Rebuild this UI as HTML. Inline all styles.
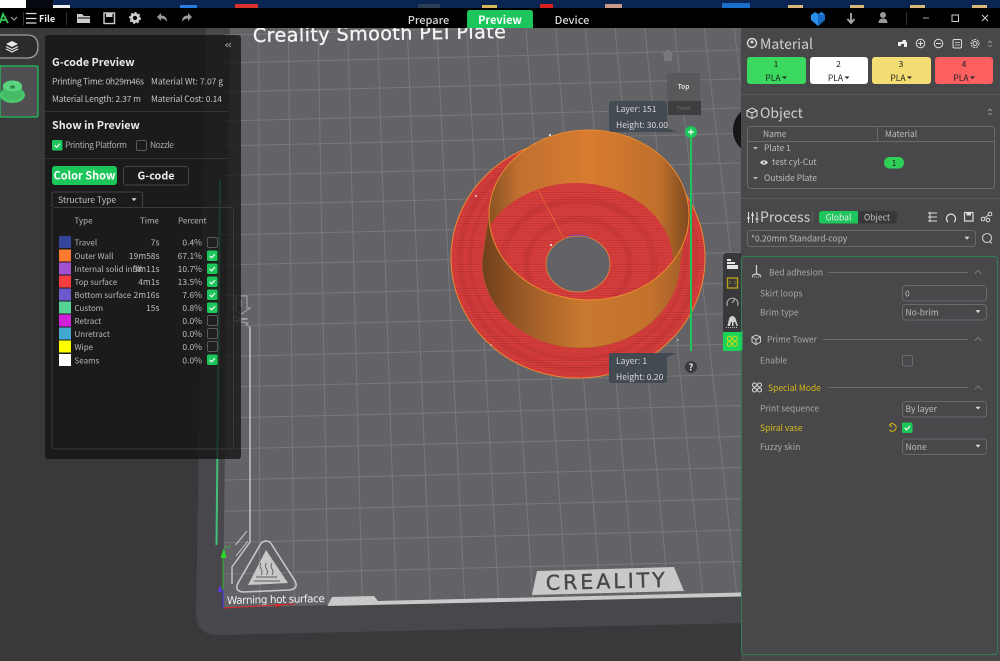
<!DOCTYPE html>
<html lang="en"><head><meta charset="utf-8"><title>Creality Print Preview</title>
<style>
html,body{margin:0;padding:0;background:#39393b;overflow:hidden}
svg{display:block;position:absolute;left:0;top:0}
text{font-family:"Noto Sans CJK SC","Liberation Sans",sans-serif;font-size:8.5px;fill:#c4c4c4}
.h{font-size:10.8px;font-weight:700;fill:#ececec}
.ttl{font-size:14px;fill:#d0d0d0}
.d{fill:#222}
.m{fill:#bdbdbd}
.l{fill:#b8b8b8;font-size:8px}
.g{fill:#a8a8a8}
.y{fill:#d8bb14}
.grid line{stroke:#78787c;stroke-width:1}
</style></head><body>
<svg width="1000" height="661" viewBox="0 0 1000 661" xmlns="http://www.w3.org/2000/svg">
<defs>
<linearGradient id="wall" x1="482" x2="680" y1="0" y2="0" gradientUnits="userSpaceOnUse"><stop offset="0" stop-color="#6f401b"/><stop offset=".22" stop-color="#9c5b27"/><stop offset=".5" stop-color="#c9782f"/><stop offset=".85" stop-color="#c4722c"/><stop offset="1" stop-color="#a8622a"/></linearGradient>
<linearGradient id="inner" x1="489" x2="689" y1="0" y2="0" gradientUnits="userSpaceOnUse"><stop offset="0" stop-color="#8a5222"/><stop offset=".15" stop-color="#c17030"/><stop offset=".5" stop-color="#d87c30"/><stop offset=".85" stop-color="#c06f2b"/><stop offset="1" stop-color="#7e4a20"/></linearGradient>
<pattern id="fine" width="3" height="2.4" patternUnits="userSpaceOnUse"><rect width="3" height="1" fill="#9c2a30" opacity=".38"/></pattern>
<clipPath id="top"><ellipse cx="589" cy="215" rx="100" ry="85"/></clipPath>
<clipPath id="view"><rect x="0" y="28" width="741" height="633"/></clipPath>
<g id="ck"><rect width="10.5" height="10.5" rx="1.5" fill="#1cc65a"/><path d="M2.6 5.4 4.6 7.3 8 3.6" fill="none" stroke="#fff" stroke-width="1.1"/></g>
<g id="uk"><rect x=".5" y=".5" width="10" height="10" rx="1.5" fill="none" stroke="#5a5a5a"/></g>
<path id="chev" d="M-3.5 2 0-1.500 3.500 2" fill="none" stroke="#777" stroke-width="1.1"/>
<path id="tri" d="M-2.500-1.200H2.500L0 1.600Z" fill="#ddd"/>
</defs>

<!-- desktop wallpaper strip -->
<rect width="1000" height="8" fill="#0b2552"/>
<rect width="26" height="8" fill="#fff"/>
<rect x="26" width="27" height="8" fill="#05080f"/>
<rect x="53" y="5" width="17" height="3" fill="#eee"/>
<rect x="180" y="5" width="17" height="3" fill="#2a7de0"/>
<rect x="235" y="4" width="23" height="4" fill="#d8322c"/>
<rect x="418" y="4" width="22" height="4" fill="#2c3f55"/>
<rect x="482" y="5" width="15" height="3" fill="#d8b45a"/>
<rect x="540" y="4" width="13" height="4" fill="#d8201f"/>
<rect x="605" y="4" width="17" height="4" fill="#c89a88"/>
<rect x="722" y="3" width="28" height="5" fill="#1a70c8"/>
<rect x="788" y="5" width="15" height="3" fill="#d8b878"/>
<rect x="850" y="5" width="14" height="3" fill="#d8b878"/>
<rect x="910" y="5" width="15" height="3" fill="#d8b878"/>
<rect x="972" y="5" width="15" height="3" fill="#d8b878"/>

<!-- viewport -->
<g clip-path="url(#view)">
<rect y="28" width="741" height="633" fill="#39393b"/>
<path d="M206 20 196 612Q196 636 220 635L745 623V20Z" fill="#48484c"/>
<path d="M230 20 223 608 745 594V20Z" fill="#636367"/>
<g class="grid">
<line x1="259.800" y1="607" x2="258.700" y2="28"/><line x1="294" y1="606" x2="288.400" y2="28"/><line x1="328.200" y1="605" x2="318.100" y2="28"/><line x1="362.300" y1="604" x2="347.800" y2="28"/><line x1="396.400" y1="603" x2="377.500" y2="28"/><line x1="430.500" y1="602" x2="407.200" y2="28"/><line x1="464.600" y1="602" x2="436.900" y2="28"/><line x1="498.700" y1="601" x2="466.600" y2="28"/><line x1="532.800" y1="600" x2="496.300" y2="28"/><line x1="566.800" y1="599" x2="526" y2="28"/><line x1="600.800" y1="598" x2="555.700" y2="28"/><line x1="634.800" y1="597" x2="585.400" y2="28"/><line x1="668.800" y1="597" x2="615.100" y2="28"/><line x1="702.800" y1="596" x2="644.800" y2="28"/><line x1="736.800" y1="595" x2="674.500" y2="28"/><line x1="770.800" y1="594" x2="704.200" y2="28"/><line x1="805" y1="594" x2="734" y2="28"/>
<line x1="225" y1="574" x2="740" y2="561.500"/><line x1="225" y1="542.600" x2="740" y2="530"/><line x1="225" y1="511.300" x2="740" y2="498.800"/><line x1="225" y1="480" x2="740" y2="467.500"/><line x1="225" y1="449" x2="740" y2="436.500"/><line x1="225" y1="418" x2="740" y2="405.500"/><line x1="225" y1="387" x2="740" y2="374.500"/><line x1="225" y1="356.500" x2="740" y2="344"/><line x1="225" y1="326" x2="740" y2="313.500"/><line x1="225" y1="295.500" x2="740" y2="283"/><line x1="225" y1="265" x2="740" y2="252.500"/><line x1="225" y1="235" x2="740" y2="222.500"/><line x1="225" y1="205" x2="740" y2="192.500"/><line x1="225" y1="175.500" x2="740" y2="163"/><line x1="225" y1="146" x2="740" y2="133.500"/><line x1="225" y1="121" x2="740" y2="108"/><line x1="225" y1="92" x2="740" y2="79"/><line x1="225" y1="63" x2="740" y2="50"/><line x1="225" y1="35" x2="740" y2="22"/>
</g>
<!-- plate title -->
<text x="253" y="42" transform="rotate(-0.9 253 42)" textLength="253" style="font-family:'DejaVu Sans',sans-serif;font-size:19px;fill:#f4f4f4;stroke:#f4f4f4;stroke-width:.35">Creality Smooth PEI Plate</text>

<!-- plate markings -->
<path d="M327.500 606 332 597 374 596 378 601 741 592.500V596.500Z" fill="#c9c9c9"/>
<path d="M532 595 537 571 674 567 684 591Z" fill="#c9c9c9"/>
<text x="546" y="590" textLength="119" transform="rotate(-1.500 546 590)" style="font-family:'DejaVu Sans',sans-serif;font-size:20.500px;fill:#48484c;stroke:#48484c;stroke-width:.4">CREALITY</text>
<path d="M250 327V542L232 567V584" fill="none" stroke="#c8c8c8" stroke-width="1.400"/>
<path d="M235.600 545 247 531M236 556 248 541" stroke="#c8c8c8" stroke-width="1"/>
<path d="M266 541Q262 541 260 545L238 583Q234 591 243 592L289 590Q299 589 295 581L272 545Q270 541 266 541Z" fill="none" stroke="#c8c8c8" stroke-width="1.600"/>
<path d="M266 550 288 583 248 585Z" fill="#c8c8c8"/>
<path d="M261 563q-2 3 0 6t0 6M266.500 563q-2 3 0 6t0 6M272 563q-2 3 0 6t0 6M256 577H277M254 581H280" stroke="#5c5c60" stroke-width=".9" fill="none"/>
<text x="227" y="604" textLength="98" transform="rotate(-1.200 227 604)" style="font-family:'DejaVu Sans',sans-serif;font-size:10.500px;fill:#f0f0f0">Warning hot surface</text>
<!-- axes -->
<path d="M223 608 295 604" stroke="#e0252a" stroke-width="1"/>
<path d="M276 604 284 605 276 607Z" fill="#f01c1c"/>
<path d="M223 555V606" stroke="#27b52a" stroke-width="1"/>
<path d="M220.500 558 224 548 226.500 558Z" fill="#2ad82a"/>
<path d="M224 546 228 548 231 545" stroke="#3fb04a" fill="none" stroke-width=".8"/>
<path d="M223 590V608" stroke="#3b2fe0" stroke-width="1"/>
<path d="M218 592 220 585 222 592Z" fill="#5b34f0"/>
<path d="M216.500 545 220 180" stroke="#41bf7a" stroke-width="2"/>
<!-- arrow marker -->
<path d="M236 296H247V308H250L241.500 314 232 308H236ZM241 300V307M233 317 248 319 233 321 248 323 246 324.500 250 327" fill="none" stroke="#a8a8a8" stroke-width="1"/>
<!-- model -->
<ellipse cx="578" cy="258" rx="127" ry="120" fill="#d93e3c" stroke="#ee8a30" stroke-width="1"/>
<ellipse cx="578" cy="258" rx="126.500" ry="119.500" fill="url(#fine)"/>
<g fill="none" stroke="#8f2529" opacity=".14">
<ellipse cx="578" cy="258" rx="118" ry="111" stroke-width="6"/><ellipse cx="578" cy="258" rx="108" ry="101" stroke-width="4"/>
</g>
<path d="M489 215 482 262A99 86 0 0 0 680 262L689 215Z" fill="url(#wall)" stroke="#a85f28" stroke-width=".5"/>
<ellipse cx="589" cy="215" rx="100" ry="85" fill="url(#inner)"/>
<g clip-path="url(#top)">
<ellipse cx="576" cy="262" rx="97" ry="79" fill="#da3e3c"/>
<ellipse cx="576" cy="262" rx="97" ry="79" fill="url(#fine)"/>
<g fill="none" stroke="#8f2529" opacity=".13">
<ellipse cx="578" cy="264" rx="76" ry="64" stroke-width="7"/><ellipse cx="578" cy="264" rx="52" ry="45" stroke-width="6"/>
</g>
</g>
<ellipse cx="589" cy="215" rx="100" ry="85" fill="none" stroke="#ea8a30" stroke-width="1"/>
<ellipse cx="578" cy="264" rx="32" ry="28" fill="#636367" stroke="#e68a38" stroke-width=".8"/>
<path d="M563 237 538 190" stroke="#e58a35" stroke-width=".7" opacity=".8"/>
<path d="M568 236Q578 233 589 237" fill="none" stroke="#6040d0" stroke-width=".7"/>
<circle cx="550" cy="135" r="1" fill="#fff"/><circle cx="476" cy="196" r="1" fill="#ddd"/><circle cx="551" cy="245" r="1" fill="#fff"/>
<circle cx="491" cy="345" r=".8" fill="#ddd"/><circle cx="678" cy="340" r=".8" fill="#ddd"/>

<!-- home & view cube -->
<path d="M662 55 668 49 674 55H672V61H664V55Z" fill="#78787c"/>
<rect x="667" y="73" width="33" height="28" fill="#59595c"/>
<text x="683.500" y="89" text-anchor="middle" style="font-size:6.500px;font-weight:700;fill:#ddd">Top</text>
<rect x="668" y="101" width="33" height="14" fill="#3e3e41"/>
<text x="684" y="110" text-anchor="middle" style="font-size:5.500px;fill:#707074">Front</text>

<!-- layer tooltips and slider -->
<path d="M612 101H664Q667 101 667 104V128L677 132H612Q609 132 609 129V104Q609 101 612 101Z" fill="#434a52"/>
<text x="616" y="112" style="fill:#d8d8d8;font-size:8.500px">Layer: 151</text>
<text x="616" y="128" style="fill:#d8d8d8;font-size:8.500px">Height: 30.00</text>
<path d="M612 383H664Q667 383 667 380V357L677 353H612Q609 353 609 356V380Q609 383 612 383Z" fill="#434a52"/>
<text x="616" y="364" style="fill:#d8d8d8;font-size:8.500px">Layer: 1</text>
<text x="616" y="380" style="fill:#d8d8d8;font-size:8.500px">Height: 0.20</text>
<rect x="690" y="132" width="2" height="219" fill="#1cc65a"/>
<circle cx="691" cy="132" r="6" fill="#1cc65a"/>
<path d="M688 132H694M691 129V135" stroke="#fff" stroke-width="1.200"/>
<circle cx="691" cy="367" r="6" fill="#3a3a3e"/>
<text x="691" y="370.500" text-anchor="middle" style="font-size:9px;font-weight:700;fill:#eee">?</text>

<circle cx="758" cy="130" r="25" fill="#161618"/>
<!-- right side toolbar -->
<path d="M741 253H727Q723 253 723 257V347Q723 351 727 351H741Z" fill="#38383b"/>
<path d="M727 259H731V261H727ZM727 262H735V264H727ZM727 265H738V269H727Z" fill="#e6e6e6"/>
<rect x="727.500" y="278" width="10" height="10" fill="none" stroke="#b6a01c" stroke-width="1.400"/><path d="M730 281V285M735 281V285" stroke="#b6a01c" stroke-dasharray="1 1"/>
<path d="M727.500 306A5.500 5.500 0 1 1 737.500 306" fill="none" stroke="#aaa" stroke-width="1.200"/><path d="M732 303 735 299" stroke="#aaa" stroke-width="1.200"/>
<path d="M727.500 326 729 319Q730 316 732 316 735 316 736 320L738 326H736.500L735 322H733.500V326H732V322H731L730 326Z" fill="#d0d0d0"/><path d="M726 327.500H738" stroke="#bbb" stroke-dasharray="1 1"/>
<rect x="723" y="332" width="18" height="19" rx="1" fill="#1bd45a"/>
<g fill="none" stroke="#c8d81a" stroke-width="1.100"><circle cx="729.500" cy="338.500" r="2.300"/><circle cx="735" cy="338.500" r="2.300"/><circle cx="729.500" cy="344" r="2.300"/><circle cx="735" cy="344" r="2.300"/></g>
</g>

<!-- left strip -->
<path d="M0 35H27Q38 35 38 46.500 38 58 27 58H0" fill="#2b2b2c" stroke="#a0a0a0" stroke-width="1.300"/>
<path d="M12 41 18 44 12 47 6 44Z" fill="#e8e8e8"/><path d="M6 46.500 12 49.500 18 46.500M6 49 12 52 18 49" fill="none" stroke="#e8e8e8" stroke-width="1.200"/>
<path d="M0 66H36Q38 66 38 68V115Q38 117 36 117H0Z" fill="#505053" stroke="#1ec05a" stroke-width="1.300"/>
<ellipse cx="12.500" cy="95" rx="12.500" ry="8" fill="#49c86c"/>
<path d="M3 85V94A9.500 6 0 0 0 22 94V85Z" fill="#44bb64"/>
<ellipse cx="12.500" cy="86" rx="9.500" ry="5.500" fill="#5ad47e"/>
<ellipse cx="12.500" cy="87" rx="2.600" ry="1.700" fill="#2f8a4c"/>

<!-- left panel -->
<rect x="45" y="35" width="196" height="424" rx="3" fill="#131313" fill-opacity=".76"/>
<path d="M228 43 225.500 45 228 47M231 43 228.500 45 231 47" fill="none" stroke="#bbb" stroke-width=".8"/>
<text x="52" y="66" class="h">G-code Preview</text>
<text x="52" y="84.500" textLength="92">Printing Time: 0h29m46s</text>
<text x="151" y="84.500" textLength="72">Material Wt: 7.07 g</text>
<text x="52" y="102" textLength="89">Material Length: 2.37 m</text>
<text x="151" y="102" textLength="71">Material Cost: 0.14</text>
<path d="M45 111.500H229" stroke="#333"/>
<text x="52" y="129" class="h">Show in Preview</text>
<use href="#ck" x="52" y="140"/>
<text x="65" y="148" class="g" textLength="62">Printing Platform</text>
<use href="#uk" x="136" y="140"/>
<text x="150" y="148" class="g" textLength="24">Nozzle</text>
<path d="M45 158.500H229" stroke="#333"/>
<rect x="52" y="166" width="65" height="19" rx="3" fill="#1cc65a"/>
<text x="84.500" y="179.500" text-anchor="middle" style="font-size:11px;font-weight:700;fill:#fff">Color Show</text>
<rect x="123.500" y="166.500" width="65" height="18.500" rx="3" fill="none" stroke="#444"/>
<text x="156" y="179.500" text-anchor="middle" class="h">G-code</text>
<path d="M52 207V194Q52 192 54 192H140Q142.500 192 142.500 194V207" fill="none" stroke="#444"/>
<text x="58" y="203">Structure Type</text>
<use href="#tri" x="134" y="199.500"/>
<rect x="52" y="207.500" width="181.500" height="241.500" rx="3" fill="none" stroke="#3b3b3b"/>
<text x="74.500" y="223.500" class="l">Type</text><text x="140" y="223.500" class="l">Time</text><text x="178" y="223.500" class="l">Percent</text>

<g>
<rect x="59" y="236" width="12" height="12" fill="#35459b"/><text x="74.500" y="245.500" class="l">Travel</text><text x="159.500" y="245.500" text-anchor="end" class="m">7s</text><text x="202" y="245.500" text-anchor="end" class="m">0.4%</text><use href="#uk" x="207" y="237"/>
<rect x="59" y="249.500" width="12" height="12" fill="#ff7a2e"/><text x="74.500" y="259" class="l">Outer Wall</text><text x="159.500" y="259" text-anchor="end" class="m">19m58s</text><text x="202" y="259" text-anchor="end" class="m">67.1%</text><use href="#ck" x="207" y="250.500"/>
<rect x="59" y="262.500" width="12" height="12" fill="#a150d0"/><text x="74.500" y="272" class="l">Internal solid infill</text><text x="159.500" y="272" text-anchor="end" class="m">3m11s</text><text x="202" y="272" text-anchor="end" class="m">10.7%</text><use href="#ck" x="207" y="263.500"/>
<rect x="59" y="275.500" width="12" height="12" fill="#f63d3f"/><text x="74.500" y="285" class="l">Top surface</text><text x="159.500" y="285" text-anchor="end" class="m">4m1s</text><text x="202" y="285" text-anchor="end" class="m">13.5%</text><use href="#ck" x="207" y="276.500"/>
<rect x="59" y="288.500" width="12" height="12" fill="#6c58cc"/><text x="74.500" y="298" class="l">Bottom surface</text><text x="159.500" y="298" text-anchor="end" class="m">2m16s</text><text x="202" y="298" text-anchor="end" class="m">7.6%</text><use href="#ck" x="207" y="289.500"/>
<rect x="59" y="301.500" width="12" height="12" fill="#55d396"/><text x="74.500" y="311" class="l">Custom</text><text x="159.500" y="311" text-anchor="end" class="m">15s</text><text x="202" y="311" text-anchor="end" class="m">0.8%</text><use href="#ck" x="207" y="302.500"/>
<rect x="59" y="314.500" width="12" height="12" fill="#d020d8"/><text x="74.500" y="324" class="l">Retract</text><text x="202" y="324" text-anchor="end" class="m">0.0%</text><use href="#uk" x="207" y="315"/>
<rect x="59" y="327.500" width="12" height="12" fill="#41a9d0"/><text x="74.500" y="337" class="l">Unretract</text><text x="202" y="337" text-anchor="end" class="m">0.0%</text><use href="#uk" x="207" y="328"/>
<rect x="59" y="340.500" width="12" height="12" fill="#ffff00"/><text x="74.500" y="350" class="l">Wipe</text><text x="202" y="350" text-anchor="end" class="m">0.0%</text><use href="#uk" x="207" y="341"/>
<rect x="59" y="354" width="12" height="12" fill="#fff"/><text x="74.500" y="363.500" class="l">Seams</text><text x="202" y="363.500" text-anchor="end" class="m">0.0%</text><use href="#ck" x="207" y="354.500"/>
</g>

<!-- top bar -->
<rect y="8" width="1000" height="20" fill="#000"/>
<path d="M0 23 3 14 8 23M1 20H6" fill="none" stroke="#36c95a" stroke-width="1.800"/>
<path d="M11 17 14 20 17 17" fill="none" stroke="#aaa"/>
<path d="M23.500 12V25M66.500 12V25" stroke="#333"/>
<path d="M26 13.500H36.500M26 18.500H36.500M26 23H36.500" stroke="#ddd" stroke-width="1.200"/>
<text x="39" y="22" style="font-size:9px;font-weight:700;fill:#f0f0f0">File</text>
<path d="M77 14H82L84 16H90V23H77Z" fill="#ccc"/><path d="M78 18H90" stroke="#000"/>
<rect x="104" y="13" width="10.500" height="10.500" fill="none" stroke="#ccc" stroke-width="1.400"/><rect x="106" y="13" width="6.500" height="4" fill="#ccc"/>
<circle cx="135" cy="18" r="3.500" fill="none" stroke="#ccc" stroke-width="2.800"/><circle cx="135" cy="18" r="5.200" fill="none" stroke="#ccc" stroke-width="1.500" stroke-dasharray="2 2"/>
<path d="M157 17 161 13V15.500Q167 15.500 167 22 165 18.500 161 18.500V21Z" fill="#999"/>
<path d="M192 17 188 13V15.500Q182 15.500 182 22 184 18.500 188 18.500V21Z" fill="#999"/>
<text x="428.500" y="24" text-anchor="middle" style="font-size:11px;font-weight:500;fill:#d8d8d8">Prepare</text>
<path d="M467 28V13Q467 10 470 10H530Q533 10 533 13V28Z" fill="#1cc65a"/>
<text x="500" y="24" text-anchor="middle" style="font-size:11px;font-weight:700;fill:#fff">Preview</text>
<text x="572" y="24" text-anchor="middle" style="font-size:11px;font-weight:500;fill:#d8d8d8">Device</text>
<path d="M811 15 815 12 818 14 822 12 825 15V20L818 26 811 20Z" fill="#2a8fe8"/><path d="M818 14 825 15V20L818 26Z" fill="#1668c0"/>
<path d="M851 13V22M847.500 19 851 23 854.500 19" fill="none" stroke="#aaa" stroke-width="1.800"/>
<circle cx="883" cy="15" r="3" fill="#999"/><path d="M878.500 23Q878.500 18.500 883 18.500 887.500 18.500 887.500 23Z" fill="#999"/>
<path d="M906.500 12V25" stroke="#333"/>
<path d="M923 18H929" stroke="#aaa"/>
<rect x="952" y="15" width="6.500" height="6.500" fill="none" stroke="#ccc" stroke-width="1"/>
<path d="M982 15 988 21M988 15 982 21" stroke="#ccc" stroke-width="1"/>

<!-- right panel -->
<rect x="741" y="28" width="259" height="633" fill="#48484b"/>
<path d="M741 94.500H1000M741 198.500H1000" stroke="#58585b"/>
<circle cx="752" cy="43" r="4.500" fill="none" stroke="#ddd" stroke-width="1.400"/><circle cx="752" cy="42" r="1.500" fill="#ddd"/>
<text x="760" y="49" class="ttl">Material</text>
<path d="M898 46V42H902L903 40H906V41H905L907 42V47H904V44H901V46Z" fill="#eee"/>
<circle cx="920.500" cy="43.500" r="4.300" fill="none" stroke="#ddd"/><path d="M918 43.500H923M920.500 41V46" stroke="#ddd"/>
<circle cx="938.500" cy="43.500" r="4.300" fill="none" stroke="#ddd"/><path d="M936 43.500H941" stroke="#ddd"/>
<rect x="953" y="39.500" width="8.500" height="8.500" rx="1.500" fill="none" stroke="#ddd"/><path d="M955 42.500H960M955 45H960" stroke="#ddd" stroke-width=".8"/>
<circle cx="975" cy="43.500" r="2" fill="none" stroke="#ddd"/><circle cx="975" cy="43.500" r="4" fill="none" stroke="#ddd" stroke-dasharray="2 1"/>
<path d="M988 43 990 41 992 43M988 46H992" fill="none" stroke="#aaa" stroke-width=".8"/>

<rect x="747" y="57" width="59" height="27" rx="3" fill="#3bd95f"/>
<rect x="810" y="57" width="58" height="27" rx="3" fill="#fff"/>
<rect x="872" y="57" width="59" height="27" rx="3" fill="#f4dd73"/>
<rect x="935" y="57" width="58" height="27" rx="3" fill="#fb5f5f"/>
<text x="776" y="67" text-anchor="middle" class="d">1</text><text x="773" y="81" text-anchor="middle" class="d">PLA</text><path d="M782 76.500H787L784.500 79Z" fill="#222"/>
<text x="838.500" y="67" text-anchor="middle" class="d">2</text><text x="835.500" y="81" text-anchor="middle" class="d">PLA</text><path d="M844.500 76.500H849.500L847 79Z" fill="#222"/>
<text x="901" y="67" text-anchor="middle" class="d">3</text><text x="898" y="81" text-anchor="middle" class="d">PLA</text><path d="M907 76.500H912L909.500 79Z" fill="#222"/>
<text x="964" y="67" text-anchor="middle" class="d">4</text><text x="961" y="81" text-anchor="middle" class="d">PLA</text><path d="M970 76.500H975L972.500 79Z" fill="#222"/>

<path d="M752 108 757 110.500V116L752 118.500 747 116V110.500ZM747 110.500 752 113 757 110.500M752 113V118.500" fill="none" stroke="#ddd" stroke-width="1"/>
<text x="760" y="118" class="ttl">Object</text>
<path d="M988 111 990 109 992 111M988 114H992" fill="none" stroke="#aaa" stroke-width=".8"/>
<rect x="747.500" y="126.500" width="247" height="62" rx="3" fill="none" stroke="#69696c"/>
<path d="M748 141.500H994M877.500 127V141" stroke="#69696c"/>
<text x="763" y="137" class="m">Name</text><text x="885" y="137" class="m">Material</text>
<path d="M753 147H758L755.500 149.500Z" fill="#bbb"/>
<text x="764" y="151" class="m">Plate 1</text>
<path d="M760 162.500Q764 158 768 162.500 764 167 760 162.500Z" fill="#ddd"/><circle cx="764" cy="162.500" r="1" fill="#48484b"/>
<text x="772" y="165" class="m">test cyl-Cut</text>
<rect x="884" y="157" width="20" height="11.500" rx="5.700" fill="#2fd058"/>
<text x="894" y="166" text-anchor="middle" class="d">1</text>
<path d="M753 177H758L755.500 179.500Z" fill="#bbb"/>
<text x="764" y="181" class="m">Outside Plate</text>

<path d="M748.500 212V223M752.500 212V223M757 212V223" stroke="#ddd"/><path d="M747 218H750M751 215H754M755.500 219H758.500" stroke="#ddd" stroke-width="1.300"/>
<text x="760" y="222" class="ttl">Process</text>
<path d="M812.500 212V223" stroke="#5c5c5f"/>
<rect x="819" y="211" width="78" height="12.500" rx="3" fill="#38383a"/>
<path d="M858 211H822Q819 211 819 214V220.500Q819 223.500 822 223.500H858Z" fill="#1cc65a"/>
<text x="838.500" y="220.500" text-anchor="middle" style="fill:#eee">Global</text>
<text x="877" y="220.500" text-anchor="middle">Object</text>
<path d="M928 213H937M928 217H937M928 221H937M930 212V222" stroke="#ddd" stroke-width="1"/>
<path d="M948 222A4.500 4.500 0 1 1 954 222" fill="none" stroke="#ddd" stroke-width="1.200"/>
<rect x="964.500" y="212.500" width="8.500" height="8.500" fill="none" stroke="#ddd" stroke-width="1.200"/><rect x="966.500" y="212.500" width="4.500" height="3" fill="#ddd"/>
<circle cx="983" cy="219" r="1.800" fill="none" stroke="#ddd"/><circle cx="990" cy="214" r="1.800" fill="none" stroke="#ddd"/><circle cx="988" cy="220" r="1.800" fill="none" stroke="#ddd"/><path d="M984.500 218 988.500 215" stroke="#ddd"/>
<rect x="747.500" y="230.500" width="228" height="16" rx="3" fill="none" stroke="#69696c"/>
<text x="751" y="241.500" class="m">*0.20mm Standard-copy</text>
<use href="#tri" x="967" y="238"/>
<circle cx="987" cy="238" r="4.500" fill="none" stroke="#ccc" stroke-width="1.100"/><path d="M990 241.500 992 243.500" stroke="#ccc"/>

<!-- process box -->
<rect x="741.500" y="256.500" width="256" height="398" rx="3" fill="none" stroke="#2f7f50"/>
<rect x="741" y="331" width="1.500" height="19" fill="#1cc65a"/>
<path d="M756.500 265V274M752 276Q756.500 272 761 276" stroke="#ccc" fill="none" stroke-width="1.300"/><path d="M752 277H761" stroke="#ccc" stroke-dasharray="1 1"/>
<text x="769" y="275.500" class="g">Bed adhesion</text><path d="M828 272.500H968" stroke="#6a6a6d"/><use href="#chev" x="978" y="272"/>
<text x="760" y="296.500" class="g">Skirt loops</text>
<rect x="902.500" y="285.500" width="84" height="15.500" rx="3" fill="none" stroke="#69696c"/><text x="905" y="296.500" class="m">0</text>
<text x="760" y="315.500" class="g">Brim type</text>
<rect x="902.500" y="304.500" width="84" height="15.500" rx="3" fill="none" stroke="#69696c"/><text x="905.500" y="315.500" class="m">No-brim</text><use href="#tri" x="978" y="311.500"/>
<path d="M756 335 760.500 337V342L756 344.500 752 342V337ZM752 337 756 339.500 760.500 337M756 339.500V344.500" fill="none" stroke="#ccc"/>
<text x="767" y="342.500" class="g">Prime Tower</text><path d="M823 339.500H968" stroke="#6a6a6d"/><use href="#chev" x="978" y="339"/>
<text x="760" y="363.500" class="g">Enable</text><rect x="902.500" y="355.500" width="10" height="10.500" rx="1.500" fill="none" stroke="#69696c"/>
<g fill="none" stroke="#ddd"><circle cx="754.500" cy="385" r="2"/><circle cx="759.500" cy="385" r="2"/><circle cx="754.500" cy="390" r="2"/><circle cx="759.500" cy="390" r="2"/></g>
<text x="768" y="391" class="y">Special Mode</text><path d="M828 387.500H968" stroke="#6a6a6d"/><use href="#chev" x="978" y="387.500"/>
<text x="760" y="411.500" class="g">Print sequence</text>
<rect x="902.500" y="401.500" width="84" height="15.500" rx="3" fill="none" stroke="#69696c"/><text x="905.500" y="412" class="m">By layer</text><use href="#tri" x="978" y="408"/>
<text x="760" y="431" class="y">Spiral vase</text>
<path d="M890 424.500A3.800 3.800 0 1 1 889.500 430M892 423 889.500 425 892 427" fill="none" stroke="#d8bb14" stroke-width="1"/>
<use href="#ck" x="902" y="422.500"/>
<text x="760" y="450" class="g">Fuzzy skin</text>
<rect x="902.500" y="439" width="84" height="15.500" rx="3" fill="none" stroke="#69696c"/><text x="905.500" y="450" class="m">None</text><use href="#tri" x="978" y="446"/>
</svg>
</body></html>
